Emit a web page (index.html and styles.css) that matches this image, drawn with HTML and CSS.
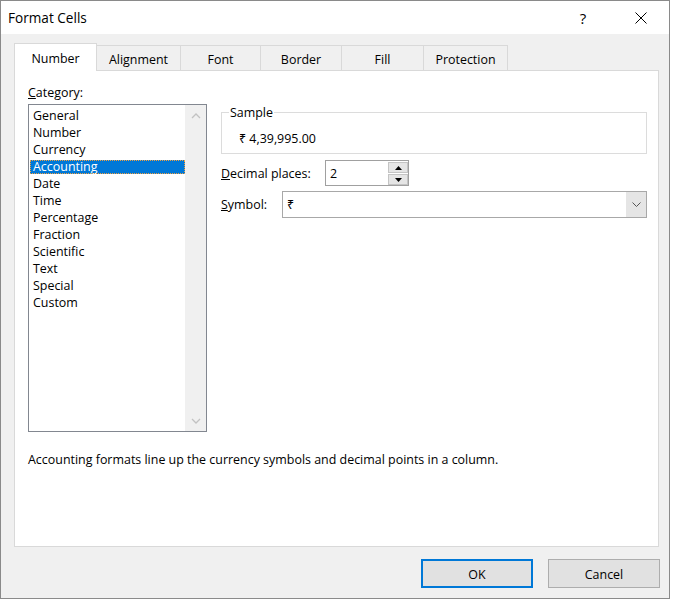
FILE: index.html
```html
<!DOCTYPE html>
<html lang="en">
<head>
<meta charset="utf-8">
<title>Format Cells</title>
<link rel="stylesheet" href="styles.css">
</head>
<body>
<div class="window">
  <div class="titlebar">
    <div class="title">Format Cells</div>
    <div class="help">?</div>
    <div class="close">
      <svg width="12" height="12" viewBox="0 0 12 12"><path d="M0.5 0.5 L11.5 11.5 M11.5 0.5 L0.5 11.5" stroke="#000" stroke-width="1" fill="none"/></svg>
    </div>
  </div>
  <div class="content">
    <div class="tabs">
      <div class="tab active w-number">Number</div>
      <div class="tab w-align">Alignment</div>
      <div class="tab w-font">Font</div>
      <div class="tab w-border">Border</div>
      <div class="tab w-fill">Fill</div>
      <div class="tab w-prot">Protection</div>
    </div>
    <div class="panel">
      <div class="row">
        <div class="left">
          <div class="label"><u>C</u>ategory:</div>
          <div class="list">
            <div class="items">
              <div class="item">General</div>
              <div class="item">Number</div>
              <div class="item">Currency</div>
              <div class="item sel">Accounting</div>
              <div class="item">Date</div>
              <div class="item">Time</div>
              <div class="item">Percentage</div>
              <div class="item">Fraction</div>
              <div class="item">Scientific</div>
              <div class="item">Text</div>
              <div class="item">Special</div>
              <div class="item">Custom</div>
            </div>
            <div class="scroll">
              <div class="scroll-arrow">
                <svg width="10" height="6" viewBox="0 0 10 6"><path d="M1 5 L5 1 L9 5" stroke="#c2c2c2" stroke-width="1.3" fill="none"/></svg>
              </div>
              <div class="scroll-arrow">
                <svg width="10" height="6" viewBox="0 0 10 6"><path d="M1 1 L5 5 L9 1" stroke="#c2c2c2" stroke-width="1.3" fill="none"/></svg>
              </div>
            </div>
          </div>
        </div>
        <div class="right">
          <fieldset class="sample">
            <legend>Sample</legend>
            <div class="sample-val">₹ 4,39,995.00</div>
          </fieldset>
          <div class="field-row decimal-row">
            <div class="field-label dec-label"><u>D</u>ecimal places:</div>
            <div class="spin">
              <span>2</span>
              <div class="spin-btns">
                <div class="spin-btn"><svg width="7" height="4" viewBox="0 0 7 4"><path d="M0 4 L3.5 0 L7 4 Z" fill="#000"/></svg></div>
                <div class="spin-btn"><svg width="7" height="4" viewBox="0 0 7 4"><path d="M0 0 L7 0 L3.5 4 Z" fill="#000"/></svg></div>
              </div>
            </div>
          </div>
          <div class="field-row symbol-row">
            <div class="field-label sym-label"><u>S</u>ymbol:</div>
            <div class="combo">
              <span>₹</span>
              <div class="combo-btn">
                <svg width="9" height="5" viewBox="0 0 9 5"><path d="M0.5 0.5 L4.5 4.5 L8.5 0.5" stroke="#555" stroke-width="1" fill="none"/></svg>
              </div>
            </div>
          </div>
        </div>
      </div>
      <div class="desc">Accounting formats line up the currency symbols and decimal points in a column.</div>
    </div>
    <div class="buttons">
      <div class="btn default">OK</div>
      <div class="btn">Cancel</div>
    </div>
  </div>
</div>
</body>
</html>
```
FILE: styles.css
```css
* { box-sizing: border-box; }

body {
  margin: 0;
  background: #ffffff;
  font-family: "Open Sans", "Noto Sans", "DejaVu Sans", sans-serif;
  font-size: 12.45px;
  color: #000;
}

.window {
  width: 670px;
  height: 599px;
  border: 1px solid #8a8a8a;
  background: #f0f0f0;
  display: flex;
  flex-direction: column;
}

.titlebar {
  height: 33px;
  flex: none;
  background: #fff;
  display: flex;
  align-items: center;
  padding-left: 7px;
}

.title { flex: 1; font-size: 13.6px; }

.help {
  width: 58px;
  text-align: center;
  font-size: 15px;
}

.close {
  width: 57px;
  display: flex;
  justify-content: center;
  align-items: center;
}

.content {
  flex: 1;
  padding: 9px 10px 0 13px;
  display: flex;
  flex-direction: column;
}

.tabs {
  display: flex;
  align-items: flex-end;
  height: 27px;
  flex: none;
  position: relative;
  z-index: 1;
}

.tab {
  height: 25px;
  border: 1px solid #d9d9d9;
  border-bottom: none;
  margin-left: -1px;
  background: #f0f0f0;
  display: flex;
  align-items: center;
  justify-content: center;
  padding-top: 2px;
}

.tab.active {
  height: 28px;
  margin-bottom: -1px;
  margin-left: 0;
  background: #fff;
  position: relative;
  z-index: 1;
}

.w-number { width: 83px; }
.w-align { width: 85px; }
.w-font { width: 81px; }
.w-border { width: 82px; }
.w-fill { width: 83px; }
.w-prot { width: 85px; }

.panel {
  height: 477px;
  flex: none;
  background: #fff;
  border: 1px solid #d9d9d9;
  padding: 13px 11px 0 13px;
}

.row {
  display: flex;
  gap: 14px;
}

.left { width: 179px; flex: none; }

.label {
  line-height: 17px;
  margin-bottom: 3px;
}

.list {
  height: 328px;
  border: 1px solid #828790;
  display: flex;
}

.items {
  flex: 1;
  padding: 4px 0 0 1px;
}

.item {
  height: 14px;
  line-height: 14px;
  margin-bottom: 3px;
  padding-left: 3px;
  white-space: nowrap;
}

.item.sel {
  background: #0078d7;
  color: #fff;
  outline: 1px dotted #f0a040;
  outline-offset: -1px;
}

.scroll {
  width: 21px;
  flex: none;
  background: #f0f0f0;
  display: flex;
  flex-direction: column;
  justify-content: space-between;
}

.scroll-arrow {
  height: 21px;
  display: flex;
  align-items: center;
  justify-content: center;
}

.right { flex: 1; }

.sample {
  margin: 21px 0 0;
  padding: 0 7px 6px 7px;
  border: 1px solid #dcdcdc;
  min-width: 0;
}

.sample legend {
  padding: 0 1px;
  line-height: 15px;
}

.sample-val {
  padding: 11px 0 0 10px;
  line-height: 16px;
}

.field-row {
  display: flex;
  align-items: center;
}

.decimal-row { margin-top: 6px; }
.symbol-row { margin-top: 5px; }

.dec-label { width: 104px; }
.sym-label { width: 61px; }

.spin {
  width: 84px;
  height: 26px;
  border: 1px solid #a0a0a0;
  display: flex;
  align-items: center;
  padding-left: 4px;
}

.spin-btns {
  margin-left: auto;
  align-self: stretch;
  width: 20px;
  display: flex;
  flex-direction: column;
  gap: 1px;
  padding-top: 1px;
}

.spin-btn {
  height: 11px;
  background: #e5e5e5;
  border: 1px solid #c4c4c4;
  display: flex;
  align-items: center;
  justify-content: center;
}

.combo {
  flex: 1;
  height: 27px;
  border: 1px solid #a8a8a8;
  display: flex;
  align-items: center;
  padding-left: 4px;
}

.combo-btn {
  margin-left: auto;
  width: 20px;
  align-self: stretch;
  background: #e5e5e5;
  display: flex;
  align-items: center;
  justify-content: center;
}

.desc {
  margin-top: 20px;
  line-height: 16px;
}

.buttons {
  display: flex;
  justify-content: flex-end;
  gap: 15px;
  margin-top: 12px;
  margin-right: -1px;
}

.btn {
  width: 112px;
  height: 29px;
  background: #e1e1e1;
  border: 1px solid #adadad;
  display: flex;
  align-items: center;
  justify-content: center;
  padding-top: 1px;
}

.btn.default { border: 2px solid #0078d7; }
```
